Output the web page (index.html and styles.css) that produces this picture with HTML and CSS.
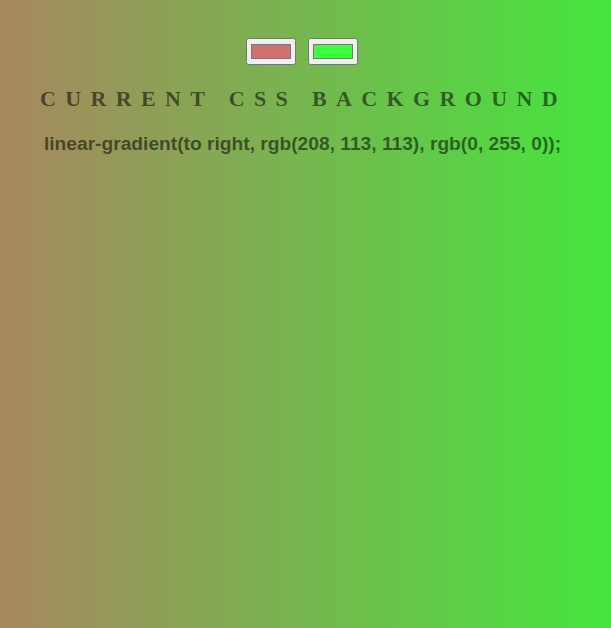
FILE: index.html
```html
<!DOCTYPE html>
<html>
<head>
<meta charset="utf-8">
<link rel="stylesheet" href="styles.css">
</head>
<body>
<div class="page">
  <div class="pickers">
    <input class="picker" type="color" value="#d07171">
    <input class="picker" type="color" value="#3cff3c">
  </div>
  <h1 class="title">Current CSS Background</h1>
  <h3 class="code">linear-gradient(to right, rgb(208, 113, 113), rgb(0, 255, 0));</h3>
</div>
</body>
</html>
```
FILE: styles.css
```css
html, body {
  margin: 0;
  height: 100%;
}
body {
  background: linear-gradient(to right, #a8875f, #44e63e);
  text-align: center;
}
.page {
  padding-top: 38px;
}
.pickers {
  display: flex;
  justify-content: center;
  gap: 12px;
  height: 27px;
  padding-right: 7px;
}
.picker {
  margin: 0;
  width: 50px;
  height: 27px;
}
.title {
  margin: 21px 0 0;
  padding-right: 4px;
  font-family: "Liberation Serif", serif;
  font-size: 22px;
  font-weight: bold;
  letter-spacing: 9.35px;
  text-transform: uppercase;
  color: rgba(0, 0, 0, 0.55);
  line-height: 26px;
}
.code {
  margin: 21px 0 0;
  padding-right: 6px;
  font-family: "Liberation Sans", Arial, sans-serif;
  font-size: 19.2px;
  font-weight: bold;
  color: rgba(0, 0, 0, 0.55);
}
```
